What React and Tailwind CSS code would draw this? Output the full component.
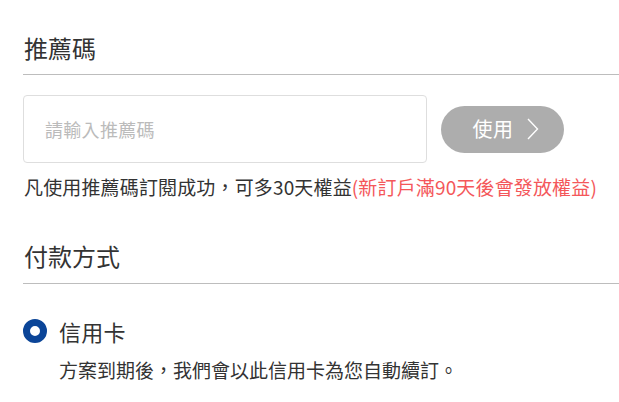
export default function App() {
  return (
    <div className="w-[619px] h-[402px] bg-white overflow-hidden text-[#333]" style={{ fontFamily: '"Noto Sans CJK TC", "Noto Sans", sans-serif' }}>
      <div className="pl-[23px]">
        <div className="pt-[30px] pb-[8px] border-b border-[#bdbdbd]">
          <h2 className="text-[24px] leading-[36px] font-normal pl-px">推薦碼</h2>
        </div>
        <div className="mt-[20px] flex items-center">
          <div className="w-[404px] h-[68px] border border-[#dedede] rounded-[4px] flex items-center pl-[21px]">
            <span className="text-[18px] text-[#bbbbbb] tracking-[0.3px]">請輸入推薦碼</span>
          </div>
          <button className="ml-[14px] w-[123px] h-[47px] rounded-full bg-[#adadad] text-white flex items-center justify-center pl-[6px]">
            <span className="text-[20px] leading-none tracking-[0.5px]">使用</span>
            <svg className="ml-[13px]" width="12" height="22" viewBox="0 0 12 22" fill="none" stroke="white" strokeWidth="1.4">
              <polyline points="1,1 10.5,11 1,21" />
            </svg>
          </button>
        </div>
        <p className="mt-[10px] text-[19px] leading-[28px] pl-px tracking-[0.15px]">
          凡使用推薦碼訂閱成功，可多30天權益<span className="text-[#f4575a]">(新訂戶滿90天後會發放權益)</span>
        </p>
        <div className="mt-[37px] pb-[9px] border-b border-[#bdbdbd]">
          <h2 className="text-[24px] leading-[36px] font-normal pl-px">付款方式</h2>
        </div>
        <div className="mt-[32px] flex items-center">
          <div className="w-6 h-6 rounded-full border-[7.5px] border-[#0b4598] bg-white" />
          <span className="ml-[12px] text-[22px] leading-[30px] tracking-[0.3px]">信用卡</span>
        </div>
        <p className="mt-[10px] ml-[36px] text-[19px] leading-[28px]">方案到期後，我們會以此信用卡為您自動續訂。</p>
      </div>
    </div>
  );
}
